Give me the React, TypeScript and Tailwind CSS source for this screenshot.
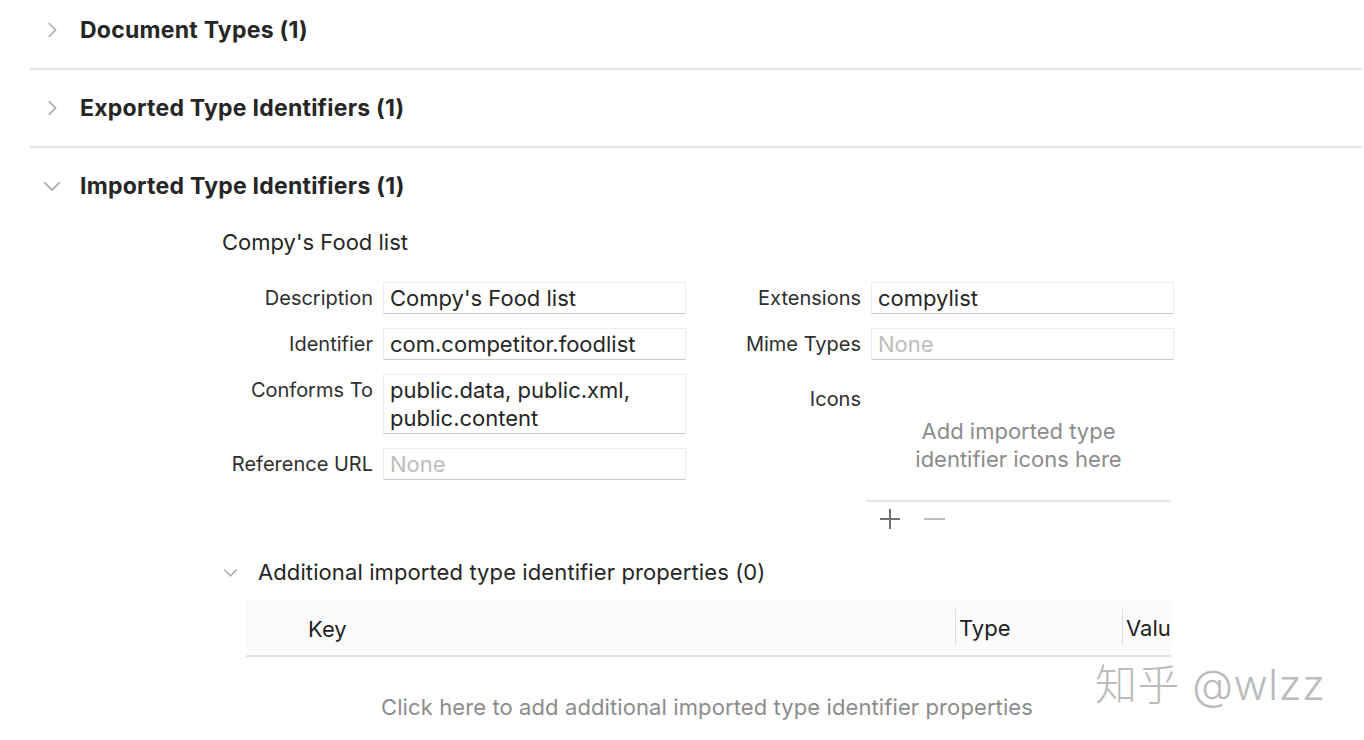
import React from 'react';

// Chevron used by the collapsible section headers
function Chevron({ open, className }: { open?: boolean; className?: string }) {
  return (
    <svg
      viewBox="0 0 20 20"
      className={className}
      fill="none"
      stroke="#b5b5b5"
      strokeWidth={2}
      strokeLinecap="round"
      strokeLinejoin="round"
    >
      {open ? <path d="M3 7l7 7 7-7" /> : <path d="M7 3l7 7-7 7" />}
    </svg>
  );
}

function SectionHeader({ title, open, tall }: { title: string; open?: boolean; tall?: boolean }) {
  return (
    <div className={`flex items-center pl-[40px] ${tall ? 'h-[76px]' : 'h-[68px] pb-[8px]'}`}>
      <div className="w-[40px] flex items-center">
        <Chevron open={open} className={open ? 'w-[20px] h-[20px] ml-[2px]' : 'w-[18px] h-[18px] ml-[3px]'} />
      </div>
      <span className="text-[23px] font-bold tracking-[0.25px] text-[#262626]">{title}</span>
    </div>
  );
}

function Field({ value, placeholder, tall }: { value?: string; placeholder?: string; tall?: boolean }) {
  return (
    <div
      className={`bg-white border border-[#ececec] border-b-[#c9c9c9] px-[6px] pt-[1px] text-[22px] leading-[28px] whitespace-pre-line ${
        tall ? 'h-[60px]' : 'h-[32px]'
      } ${value ? 'text-[#262626]' : 'text-[#bdbdbd]'}`}
    >
      {value ?? placeholder}
    </div>
  );
}

function Label({ children, className }: { children: React.ReactNode; className?: string }) {
  return (
    <div className={`text-right text-[20px] leading-[28px] pt-[2px] text-[#2e2e2e] ${className ?? ''}`}>{children}</div>
  );
}

export default function App() {
  return (
    <div
      className="relative w-[1364px] h-[740px] overflow-hidden bg-white"
      style={{ fontFamily: 'Inter, "Noto Sans CJK SC", sans-serif' }}
    >
      <SectionHeader title="Document Types (1)" />
      <div className="ml-[30px] mr-[2px] h-[2px] bg-[#e6e6e6]" />
      <SectionHeader title="Exported Type Identifiers (1)" tall />
      <div className="ml-[30px] mr-[2px] h-[2px] bg-[#e6e6e6]" />
      <SectionHeader title="Imported Type Identifiers (1)" open tall />

      <div className="pl-[222px]">
        <div className="mt-[6px] text-[22px] leading-[24px] text-[#262626]">Compy's Food list</div>

        <div className="mt-[28px] flex">
          {/* left column */}
          <div className="grid grid-cols-[151px_303px] gap-x-[10px] gap-y-[14px] content-start">
            <Label>Description</Label>
            <Field value="Compy's Food list" />
            <Label>Identifier</Label>
            <Field value="com.competitor.foodlist" />
            <Label>Conforms To</Label>
            <Field value={'public.data, public.xml,\npublic.content'} tall />
            <Label>Reference URL</Label>
            <Field placeholder="None" />
          </div>

          {/* right column */}
          <div className="ml-[14px] grid grid-cols-[161px_303px] gap-x-[10px] gap-y-[14px] content-start">
            <Label>Extensions</Label>
            <Field value="compylist" />
            <Label>Mime Types</Label>
            <Field placeholder="None" />
            <Label className="pt-[11px]">Icons</Label>
            <div>
              <div className="ml-[-5px] w-[305px] h-[128px] border-b-2 border-[#e6e6e6] pt-[43px] text-center text-[22px] leading-[28px] text-[#8c8c8c]">
                Add imported type
                <br />
                identifier icons here
              </div>
              <div className="flex items-center h-[34px] pl-[8px] gap-[22px]">
                <svg viewBox="0 0 22 22" className="w-[22px] h-[22px]" stroke="#707070" strokeWidth={2}>
                  <path d="M11 1v20M1 11h20" />
                </svg>
                <svg viewBox="0 0 22 22" className="w-[22px] h-[22px]" stroke="#bdbdbd" strokeWidth={2}>
                  <path d="M1 11h21" />
                </svg>
              </div>
            </div>
          </div>
        </div>

        <div className="mt-[22px] flex items-center h-[28px]">
          <Chevron open className="w-[17px] h-[17px]" />
          <span className="ml-[19px] text-[22px] tracking-[0.1px] text-[#262626]">
            Additional imported type identifier properties (0)
          </span>
        </div>

        {/* properties table */}
        <div className="ml-[24px] mt-[13px] w-[925px]">
          <div className="h-[58px] bg-[#fbfbfb] border-b-2 border-[#e3e3e3] flex items-center text-[22px] text-[#1f1f1f]">
            <div className="w-[709px] pl-[62px] pt-[4px]">Key</div>
            <div className="w-[167px] h-[36px] border-l border-[#dedede] pl-[3px] pt-[2px] flex items-center">Type</div>
            <div className="flex-1 h-[36px] border-l border-[#dedede] pl-[3px] pt-[2px] flex items-center overflow-hidden whitespace-nowrap">
              Value
            </div>
          </div>
        </div>

        <div className="w-[970px] mt-[34px] text-center text-[22px] tracking-[0.1px] text-[#8c8c8c]">
          Click here to add additional imported type identifier properties
        </div>
      </div>

      {/* watermark */}
      <div className="absolute left-[1095px] top-[658px] text-[42px] leading-[54px] tracking-[0.5px] font-light text-[#a8a8a8]/80">
        知乎 @wlzz
      </div>
    </div>
  );
}
